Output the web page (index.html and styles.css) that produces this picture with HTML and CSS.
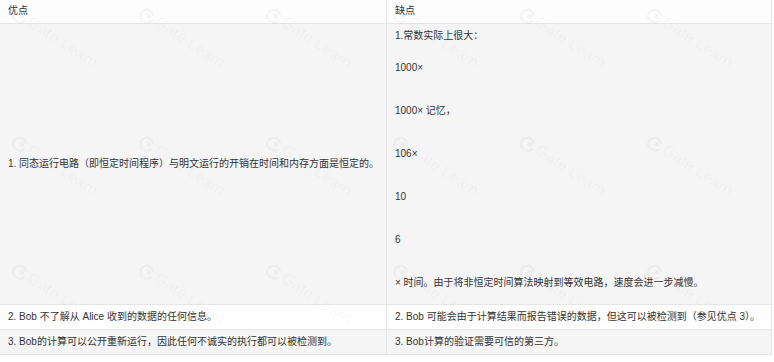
FILE: index.html
```html
<!DOCTYPE html>
<html lang="zh-CN">
<head>
<meta charset="utf-8">
<title>优点与缺点</title>
<link rel="stylesheet" href="styles.css">
</head>
<body>
<div class="wrap">
  <table class="cmp">
    <colgroup><col class="c1"><col class="c2"></colgroup>
    <thead>
      <tr><th>优点</th><th>缺点</th></tr>
    </thead>
    <tbody>
      <tr class="row-grey">
        <td class="mid">1. 同态运行电路（即恒定时间程序）与明文运行的开销在时间和内存方面是恒定的。</td>
        <td class="tall">
          <p class="first">1.常数实际上很大：</p>
          <p>1000×</p>
          <p>1000× 记忆，</p>
          <p>106×</p>
          <p>10</p>
          <p>6</p>
          <p>× 时间。由于将非恒定时间算法映射到等效电路，速度会进一步减慢。</p>
        </td>
      </tr>
      <tr class="row-white">
        <td>2. Bob 不了解从 Alice 收到的数据的任何信息。</td>
        <td>2. Bob 可能会由于计算结果而报告错误的数据，但这可以被检测到（参见优点 3）。</td>
      </tr>
      <tr class="row-grey">
        <td>3. Bob的计算可以公开重新运行，因此任何不诚实的执行都可以被检测到。</td>
        <td>3. Bob计算的验证需要可信的第三方。</td>
      </tr>
    </tbody>
  </table>
  <div class="wm" aria-hidden="true">
    <span class="mark"><svg viewBox="0 0 16 16"><path d="M13.5 4.5A7 7 0 1 0 15 10" fill="none" stroke="currentColor" stroke-width="2.4"/><rect x="8" y="5.5" width="4.5" height="4.5" fill="currentColor"/></svg>Gate Learn</span>
    <span class="mark"><svg viewBox="0 0 16 16"><path d="M13.5 4.5A7 7 0 1 0 15 10" fill="none" stroke="currentColor" stroke-width="2.4"/><rect x="8" y="5.5" width="4.5" height="4.5" fill="currentColor"/></svg>Gate Learn</span>
    <span class="mark"><svg viewBox="0 0 16 16"><path d="M13.5 4.5A7 7 0 1 0 15 10" fill="none" stroke="currentColor" stroke-width="2.4"/><rect x="8" y="5.5" width="4.5" height="4.5" fill="currentColor"/></svg>Gate Learn</span>
    <span class="mark"><svg viewBox="0 0 16 16"><path d="M13.5 4.5A7 7 0 1 0 15 10" fill="none" stroke="currentColor" stroke-width="2.4"/><rect x="8" y="5.5" width="4.5" height="4.5" fill="currentColor"/></svg>Gate Learn</span>
    <span class="mark"><svg viewBox="0 0 16 16"><path d="M13.5 4.5A7 7 0 1 0 15 10" fill="none" stroke="currentColor" stroke-width="2.4"/><rect x="8" y="5.5" width="4.5" height="4.5" fill="currentColor"/></svg>Gate Learn</span>
    <span class="mark"><svg viewBox="0 0 16 16"><path d="M13.5 4.5A7 7 0 1 0 15 10" fill="none" stroke="currentColor" stroke-width="2.4"/><rect x="8" y="5.5" width="4.5" height="4.5" fill="currentColor"/></svg>Gate Learn</span>
    <span class="mark"><svg viewBox="0 0 16 16"><path d="M13.5 4.5A7 7 0 1 0 15 10" fill="none" stroke="currentColor" stroke-width="2.4"/><rect x="8" y="5.5" width="4.5" height="4.5" fill="currentColor"/></svg>Gate Learn</span>
    <span class="mark"><svg viewBox="0 0 16 16"><path d="M13.5 4.5A7 7 0 1 0 15 10" fill="none" stroke="currentColor" stroke-width="2.4"/><rect x="8" y="5.5" width="4.5" height="4.5" fill="currentColor"/></svg>Gate Learn</span>
    <span class="mark"><svg viewBox="0 0 16 16"><path d="M13.5 4.5A7 7 0 1 0 15 10" fill="none" stroke="currentColor" stroke-width="2.4"/><rect x="8" y="5.5" width="4.5" height="4.5" fill="currentColor"/></svg>Gate Learn</span>
    <span class="mark"><svg viewBox="0 0 16 16"><path d="M13.5 4.5A7 7 0 1 0 15 10" fill="none" stroke="currentColor" stroke-width="2.4"/><rect x="8" y="5.5" width="4.5" height="4.5" fill="currentColor"/></svg>Gate Learn</span>
    <span class="mark"><svg viewBox="0 0 16 16"><path d="M13.5 4.5A7 7 0 1 0 15 10" fill="none" stroke="currentColor" stroke-width="2.4"/><rect x="8" y="5.5" width="4.5" height="4.5" fill="currentColor"/></svg>Gate Learn</span>
    <span class="mark"><svg viewBox="0 0 16 16"><path d="M13.5 4.5A7 7 0 1 0 15 10" fill="none" stroke="currentColor" stroke-width="2.4"/><rect x="8" y="5.5" width="4.5" height="4.5" fill="currentColor"/></svg>Gate Learn</span>
    <span class="mark"><svg viewBox="0 0 16 16"><path d="M13.5 4.5A7 7 0 1 0 15 10" fill="none" stroke="currentColor" stroke-width="2.4"/><rect x="8" y="5.5" width="4.5" height="4.5" fill="currentColor"/></svg>Gate Learn</span>
    <span class="mark"><svg viewBox="0 0 16 16"><path d="M13.5 4.5A7 7 0 1 0 15 10" fill="none" stroke="currentColor" stroke-width="2.4"/><rect x="8" y="5.5" width="4.5" height="4.5" fill="currentColor"/></svg>Gate Learn</span>
    <span class="mark"><svg viewBox="0 0 16 16"><path d="M13.5 4.5A7 7 0 1 0 15 10" fill="none" stroke="currentColor" stroke-width="2.4"/><rect x="8" y="5.5" width="4.5" height="4.5" fill="currentColor"/></svg>Gate Learn</span>
    <span class="mark"><svg viewBox="0 0 16 16"><path d="M13.5 4.5A7 7 0 1 0 15 10" fill="none" stroke="currentColor" stroke-width="2.4"/><rect x="8" y="5.5" width="4.5" height="4.5" fill="currentColor"/></svg>Gate Learn</span>
    <span class="mark"><svg viewBox="0 0 16 16"><path d="M13.5 4.5A7 7 0 1 0 15 10" fill="none" stroke="currentColor" stroke-width="2.4"/><rect x="8" y="5.5" width="4.5" height="4.5" fill="currentColor"/></svg>Gate Learn</span>
    <span class="mark"><svg viewBox="0 0 16 16"><path d="M13.5 4.5A7 7 0 1 0 15 10" fill="none" stroke="currentColor" stroke-width="2.4"/><rect x="8" y="5.5" width="4.5" height="4.5" fill="currentColor"/></svg>Gate Learn</span>
  </div>
</div>
</body>
</html>
```

FILE: styles.css
```css
html, body {
  margin: 0;
  padding: 0;
  background: #ffffff;
}

body {
  font-family: "Liberation Sans", "Noto Sans CJK SC", sans-serif;
  font-size: 10px;
  color: #333333;
}

.wrap {
  position: relative;
  width: 772px;
  overflow: hidden;
}

.cmp {
  width: 772px;
  table-layout: fixed;
  border-collapse: separate;
  border-spacing: 0;
}

.c1 { width: 387px; }
.c2 { width: 385px; }

.cmp th,
.cmp td {
  box-sizing: border-box;
  text-align: left;
  font-weight: normal;
  line-height: 14px;
  padding: 5px 3px 5px 8px;
  border-right: 1px solid #e6e6e6;
  border-bottom: 1px solid #e6e6e6;
  vertical-align: middle;
}

.cmp td.mid {
  white-space: nowrap;
}

.cmp th {
  height: 24px;
  padding: 4px 3px 5px 8px;
  background: #fdfdfd;
}

.row-grey td { background: #f5f5f5; height: 25px; }
.row-white td { background: #fefefe; height: 25px; }

.cmp td.tall {
  padding: 5px 3px 14px 8px;
  vertical-align: top;
}

.tall p {
  margin: 0 0 29px;
}

.tall p.first {
  margin-bottom: 18px;
}

.tall p:last-child {
  margin-bottom: 0;
}

.wm {
  position: absolute;
  inset: 0;
  pointer-events: none;
  display: grid;
  grid-template-columns: repeat(6, 127px);
  grid-auto-rows: 128px;
  padding: 3px 0 0 14px;
  color: rgba(0, 0, 0, 0.035);
}

.mark {
  display: inline-flex;
  align-items: center;
  gap: 3px;
  height: 16px;
  white-space: nowrap;
  font-family: "Liberation Sans", sans-serif;
  font-size: 16px;
  font-weight: normal;
  transform: rotate(33deg);
  transform-origin: 0 50%;
}

.mark svg {
  width: 15px;
  height: 15px;
  flex: none;
}
```
